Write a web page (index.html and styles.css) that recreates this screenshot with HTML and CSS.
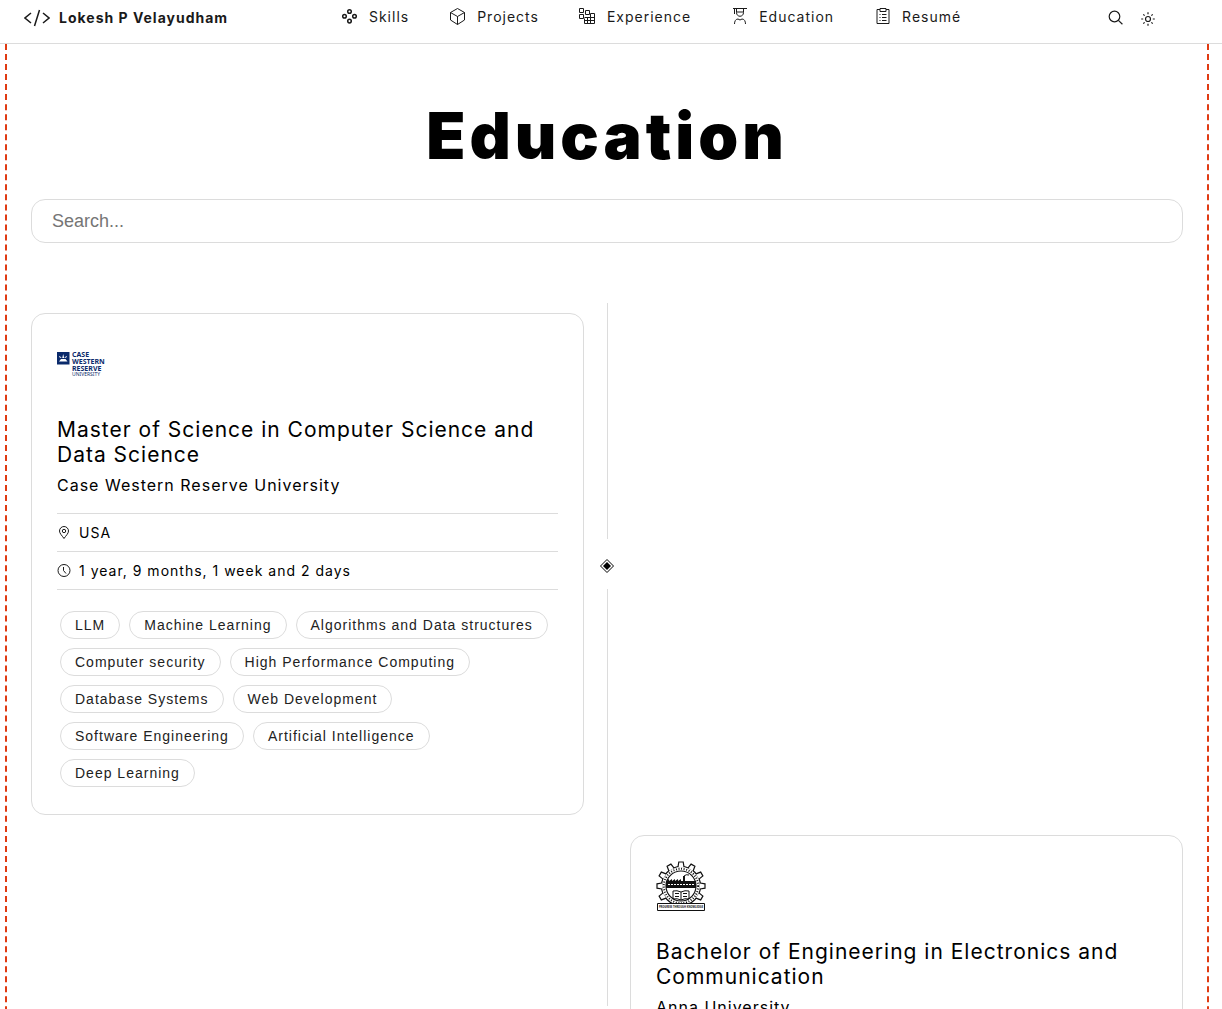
FILE: index.html
```html
<!DOCTYPE html>
<html lang="en">
<head>
<meta charset="utf-8">
<title>Education</title>
<link rel="stylesheet" href="styles.css">
</head>
<body>
<header class="topbar">
  <a class="brand" href="#">
    <svg class="brand-icon" viewBox="0 0 26 18"><path d="M7 4 1 9l6 5M19 4l6 5-6 5M15.500 1l-5 16"/></svg>
    <span>Lokesh P Velayudham</span>
  </a>
  <nav class="nav">
    <a href="#"><svg class="nav-icon heavy" viewBox="0 0 18 18"><circle cx="8.500" cy="3.500" r="1.800"/><circle cx="3.500" cy="8.300" r="1.800"/><circle cx="13.500" cy="8.300" r="1.800"/><circle cx="8.500" cy="13.100" r="1.800"/></svg>Skills</a>
    <a href="#"><svg class="nav-icon" viewBox="0 0 18 18"><path d="M8.500.500l7 4v7.500l-7 4.500-7-4.500V4.500zM1.500 4.500l7 4 7-4M8.500 8.500v8"/></svg>Projects</a>
    <a href="#"><svg class="nav-icon" viewBox="0 0 18 18"><path d="M.500.500h4v4h-4zM6.500 2.500h4v4h-4zM.500 6.500h4v4h-4zM5.500 10.500v5h10v-10h-4v4h-6M5.500 12.500h10M8.500 9.500v6M11.500 9.500v6M11.500 9.500h4"/></svg>Experience</a>
    <a href="#"><svg class="nav-icon" viewBox="0 0 18 18"><path d="M2 .500h14M3.500 1v5M5.500 1v3.500c0 5 7 5 7 0V1M5.500 4h7M3.500 16c0-2.500 1-5 3.500-5l2 1 2-1c2.500 0 3.500 2.500 3.500 5"/></svg>Education</a>
    <a href="#"><svg class="nav-icon" viewBox="0 0 18 18"><path d="M6 1.500H3v14h12v-14h-3M6 .500h6v3H6zM5.500 6.500h1M8 6.500h4.500M5.500 9.500h1M8 9.500h4.500M5.500 12.500h1M8 12.500h4.500"/></svg>Resumé</a>
  </nav>
  <div class="tools">
    <button type="button" aria-label="Search"><svg class="tool-icon" viewBox="0 0 16 16"><circle cx="6.500" cy="6.500" r="5.300"/><path d="M10.400 10.400l4 3.800"/></svg></button>
    <button type="button" aria-label="Toggle theme"><svg class="tool-icon" viewBox="0 0 16 16"><circle cx="8" cy="9" r="2.500"/><path d="M8 2.200v2M8 13.800v2M1.200 9h2M12.800 9h2M3.300 4.300l1.300 1.300M11.400 12.400l1.300 1.300M12.700 4.300l-1.300 1.300M4.600 12.400l-1.300 1.300"/></svg></button>
  </div>
</header>
<main class="frame">
  <h1>Education</h1>
  <input class="search" type="search" placeholder="Search..." aria-label="Search education">
  <section class="timeline">
    <div class="entry">
      <article class="card">
        <svg class="logo" viewBox="0 0 50 50" role="img" aria-label="Case Western Reserve University">
          <path fill="#0a2a6b" d="M0 13h12.500v12.500H0z"/><path fill="#fff" d="M2 22.500h8.500L8.500 20H4zM5.200 19h2l-1-4zM2.500 17l2 1.500-.5.500-2-1zM9.500 17l-2 1.500.5.500 2-1z"/>
          <g class="logo-text"><text x="15" y="18">CASE</text><text x="15" y="25">WESTERN</text><text x="15" y="32">RESERVE</text><text class="tiny" x="15" y="37">UNIVERSITY</text></g>
        </svg>
        <h2>Master of Science in Computer Science and Data Science</h2>
        <p class="school">Case Western Reserve University</p>
        <ul class="facts">
          <li><svg class="fact-icon" viewBox="0 0 14 14"><path d="M7 12.500C5 9.500 2.500 7.500 2.500 5a4.500 4.500 0 0 1 9 0C11.500 7.500 9 9.500 7 12.500z"/><circle cx="7" cy="5" r="1.700"/></svg>USA</li>
          <li><svg class="fact-icon" viewBox="0 0 14 14"><circle cx="7" cy="6.500" r="6"/><path d="M6.500 3v3.500l2.500 3"/></svg>1 year, 9 months, 1 week and 2 days</li>
        </ul>
        <ul class="tags">
          <li>LLM</li><li>Machine Learning</li><li>Algorithms and Data structures</li><li>Computer security</li><li>High Performance Computing</li><li>Database Systems</li><li>Web Development</li><li>Software Engineering</li><li>Artificial Intelligence</li><li>Deep Learning</li>
        </ul>
      </article>
      <div class="rail"><svg class="marker" viewBox="0 0 16 16"><path class="ring" d="M8 1.500 14.500 8 8 14.500 1.500 8z"/><path d="M8 4l4 4-4 4-4-4z"/></svg></div>
    </div>
    <div class="entry flip">
      <article class="card">
        <svg class="logo" viewBox="0 0 50 50" role="img" aria-label="Anna University">
          <defs><path id="tooth" d="M22 6l.8-5h4.400l.8 5"/></defs>
          <g fill="#fff" stroke="#111" stroke-width="1.200">
            <circle cx="25" cy="25" r="19.500"/>
            <use href="#tooth"/><use href="#tooth" transform="rotate(30 25 25)"/><use href="#tooth" transform="rotate(60 25 25)"/><use href="#tooth" transform="rotate(90 25 25)"/><use href="#tooth" transform="rotate(120 25 25)"/><use href="#tooth" transform="rotate(240 25 25)"/><use href="#tooth" transform="rotate(270 25 25)"/><use href="#tooth" transform="rotate(300 25 25)"/><use href="#tooth" transform="rotate(330 25 25)"/>
            <circle cx="25" cy="25" r="15"/>
            <circle cx="25" cy="25" r="17.200" fill="none" stroke-width="2" stroke-dasharray="1 1.600"/>
          </g>
          <path fill="#111" d="M10 27v-7l3-2v2l3-2v2l3-2v2l3-2v2l3-2v2h2v-5h2v5h11v7z"/>
          <path fill="none" stroke="#fff" stroke-dasharray="2 1" d="M12 23.500h26"/>
          <path fill="none" stroke="#111" d="M28 15q2-2 5-1M17 30q4-1 8 1 4-2 8-1v8q-4-1-8 1-4-2-8-1zM25 31v8M19 32.500h4M19 35.500h4M27 32.500h4M27 35.500h4"/>
          <path fill="#fff" stroke="#111" d="M1.500 42.500h47v7h-47z"/>
          <text class="motto" x="3" y="47">PROGRESS THROUGH KNOWLEDGE</text>
        </svg>
        <h2>Bachelor of Engineering in Electronics and Communication</h2>
        <p class="school">Anna University</p>
      </article>
      <div class="rail"><svg class="marker" viewBox="0 0 16 16"><path class="ring" d="M8 1.500 14.500 8 8 14.500 1.500 8z"/><path d="M8 4l4 4-4 4-4-4z"/></svg></div>
    </div>
  </section>
</main>
</body>
</html>
```
FILE: styles.css
```css
* { box-sizing: border-box; }
body { margin: 0; background: #fff; color: #000; font-family: Inter, "Liberation Sans", sans-serif; letter-spacing: 1px; }
ul { list-style: none; margin: 0; padding: 0; }
svg { fill: none; stroke: #1a1a1a; flex: none; }
.topbar { position: sticky; top: 0; z-index: 2; display: flex; justify-content: space-between; height: 44px; padding: 0 66px 8px 24px; border-bottom: 1px solid #dcdcdc; background: #fff; align-items: center; }
.topbar a { color: #1a1a1a; text-decoration: none; display: flex; align-items: center; }
.topbar .brand { gap: 9px; font-size: 14px; font-weight: 700; }
.brand-icon { width: 26px; height: 18px; stroke-width: 1.5; }
.nav { display: flex; gap: 40px; padding-bottom: 2px; font-size: 14px; }
.nav a { gap: 10px; }
.nav-icon { width: 18px; height: 18px; stroke-width: 1; }
.heavy { stroke-width: 1.5; }
.tools { display: flex; gap: 16px; padding-left: 34px; }
.tools button { display: flex; border: 0; background: none; padding: 0; }
.tool-icon { width: 16px; height: 16px; stroke-width: 1.2; }
.frame { margin: 0 13px 0 5px; padding: 56px 24px; border: 2px dashed #e03a12; border-width: 0 2px; }
h1 { margin: 0; font-size: 64px; line-height: 72px; font-weight: 900; text-align: center; letter-spacing: 4px; }
.search { display: block; width: 100%; height: 44px; margin: 27px 0 60px; padding: 0 20px; border: 1px solid #dcdcdc; border-radius: 14px; font: 18px "Liberation Sans", sans-serif; appearance: none; background: #fff; }
.search::placeholder { color: #757575; }
.entry { display: grid; grid-template-columns: 1fr 46px 1fr; }
.card { margin: 10px 0; padding: 25px; border: 1px solid #dcdcdc; border-radius: 14px; min-height: 392px; grid-row: 1; }
.flip .card { grid-column: 3; }
.rail { grid-row: 1; grid-column: 2; display: flex; flex-direction: column; align-items: center; }
.rail::before, .rail::after { content: ""; flex: 1; width: 1px; background: #dcdcdc; }
.marker { width: 16px; height: 16px; margin: 19px 0 15px; fill: #000; stroke: none; }
.marker .ring { fill: none; stroke: #000; }
.logo { display: block; width: 50px; height: 50px; stroke: none; }
.logo text { letter-spacing: 0; fill: #0a2a6b; font-family: "Noto Sans", sans-serif; font-weight: 700; font-size: 7px; }
.logo .tiny { font-size: 5px; font-weight: 400; }
.logo .motto { font-size: 2.6px; fill: #111; }
h2 { margin: 28px 0 8px; font-size: 21px; line-height: 25px; font-weight: 400; }
.school { margin: 0 0 18px; font-size: 16px; line-height: 20px; }
.facts { border-top: 1px solid #dcdcdc; font-size: 14px; }
.facts li { display: flex; align-items: center; gap: 8px; height: 38px; border-bottom: 1px solid #dcdcdc; }
.fact-icon { width: 14px; height: 14px; }
.tags { display: flex; flex-wrap: wrap; gap: 9px; padding: 21px 3px 2px; font: 14px/16px "Liberation Sans", sans-serif; color: #222; }
.tags li { height: 28px; padding: 5px 14px; border: 1px solid #dcdcdc; border-radius: 14px; }
```
